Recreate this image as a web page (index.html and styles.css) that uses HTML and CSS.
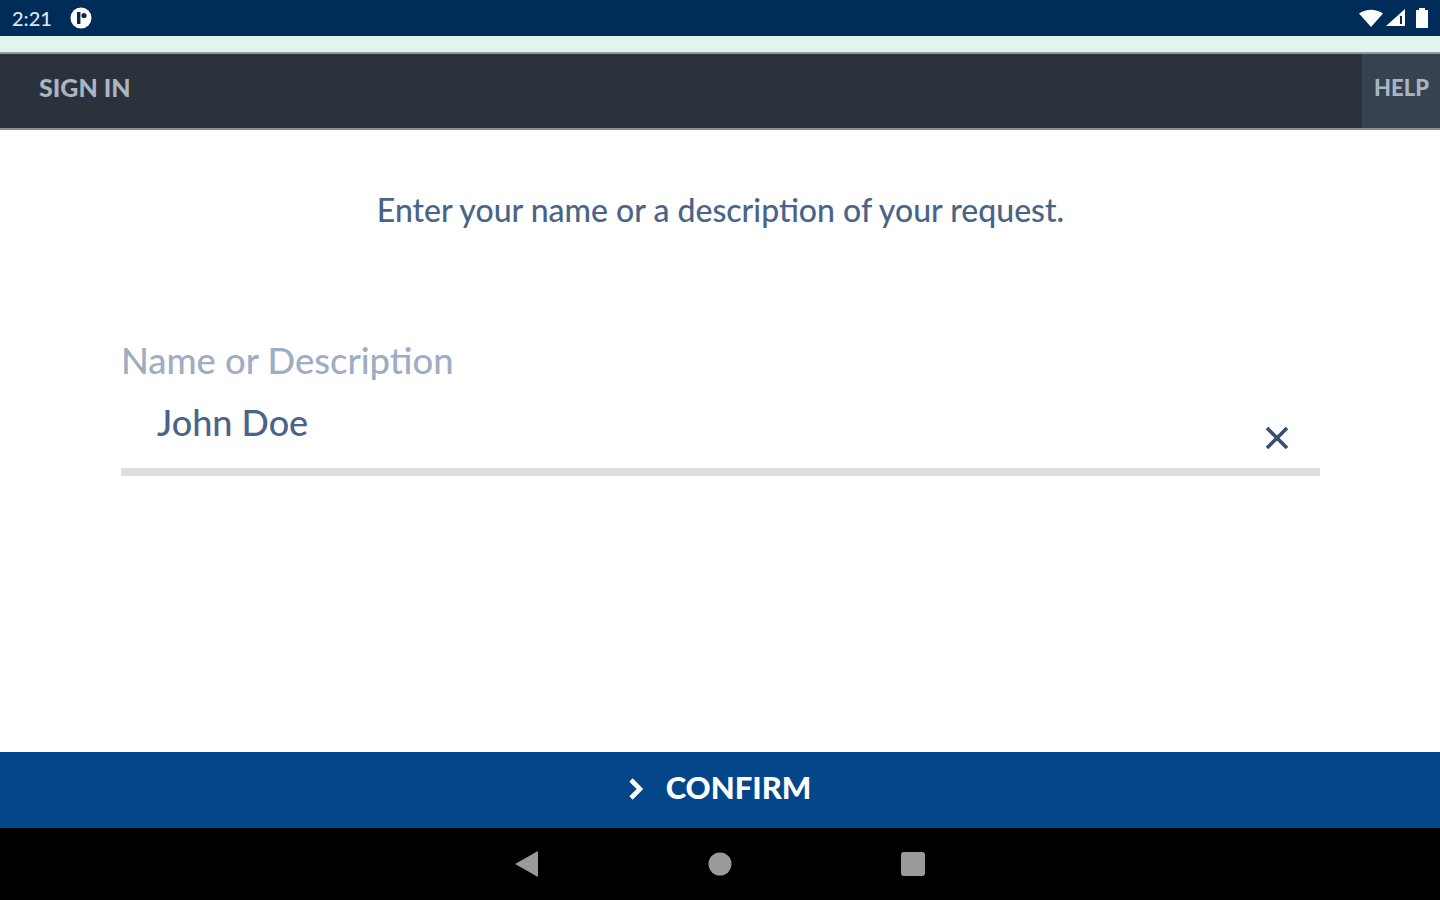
FILE: index.html
```html
<!DOCTYPE html>
<html lang="en">
<head>
  <meta charset="UTF-8">
  <meta name="viewport" content="width=device-width, initial-scale=1.0">
  <title>Sign In</title>
  <link rel="stylesheet" href="styles.css">
</head>
<body>
  <div class="status-bar">
    <div class="status-left">
      <span class="clock">2:21</span>
      <svg class="status-logo" width="22" height="22" viewBox="0 0 22 22">
        <circle cx="11" cy="11" r="10.5" fill="#fff"/>
        <rect x="7" y="5" width="3.4" height="12" fill="#0b2a4a"/>
        <circle cx="14" cy="8.5" r="2.6" fill="#0b2a4a"/>
      </svg>
    </div>
    <div class="status-right">
      <svg width="24" height="18" viewBox="0 0 24 18"><path d="M0 4.5 Q12 -3 24 4.5 L12 18Z" fill="#fff"/></svg>
      <svg width="20" height="18" viewBox="0 0 20 18"><path d="M0 17 L19 0 V17Z" fill="#fff"/><rect x="14" y="7" width="2" height="8" fill="#0b2a4a"/></svg>
      <svg class="battery" width="14" height="20" viewBox="0 0 14 20"><path d="M4 0 H10 V2 H13 V20 H1 V2 H4Z" fill="#fff"/></svg>
    </div>
  </div>
  <div class="strip"></div>

  <header class="top-bar">
    <h1>SIGN IN</h1>
    <a class="help" href="#">HELP</a>
  </header>

  <main class="content">
    <p class="intro">Enter your name or a description of your request.</p>
    <form class="field">
      <label for="name">Name or Description</label>
      <div class="input-row">
        <input id="name" type="text" value="John Doe">
        <svg class="clear" width="24" height="24" viewBox="0 0 24 24">
          <path d="M2 2 L22 22 M22 2 L2 22" stroke="#35506e" stroke-width="3.6" fill="none"/>
        </svg>
      </div>
    </form>
  </main>

  <button class="confirm">
    <svg class="chevron" width="16" height="24" viewBox="0 0 16 24"><path d="M3 3 L12 12 L3 21" stroke="#fff" stroke-width="4.6" fill="none"/></svg>
    <span>CONFIRM</span>
  </button>

  <nav class="nav-bar">
    <svg width="24" height="26" viewBox="0 0 24 26"><path d="M0 13 L23 0 V26Z" fill="#9a9a9a"/></svg>
    <svg width="24" height="24" viewBox="0 0 24 24"><circle cx="12" cy="12" r="11.5" fill="#9a9a9a"/></svg>
    <svg width="24" height="24" viewBox="0 0 24 24"><rect width="24" height="24" rx="3" fill="#9a9a9a"/></svg>
  </nav>
</body>
</html>
```

FILE: styles.css
```css
html, body {
  height: 100%;
}
body {
  margin: 0;
  height: 900px;
  overflow: hidden;
  display: flex;
  flex-direction: column;
  font-family: Lato, "Open Sans", Arial, sans-serif;
  background-color: #fff;
}
.status-bar {
  height: 36px;
  background-color: #002c5a;
  display: flex;
  justify-content: space-between;
  align-items: center;
  padding: 0 11px 0 12px;
  color: #fff;
}
.status-left {
  display: flex;
  align-items: center;
  gap: 18px;
}
.status-right {
  display: flex;
  align-items: center;
  gap: 3px;
}
.battery {
  margin-left: 6px;
}
.clock {
  font-size: 20px;
  font-weight: 500;
  color: #dfe5ec;
}
.status-logo {
  display: block;
}
.strip {
  height: 16px;
  background-color: #e3f4ee;
  border-bottom: 2px solid #8f9a9e;
}
.top-bar {
  height: 74px;
  background-color: #2b323c;
  border-bottom: 2px solid #8a9097;
  display: flex;
  justify-content: space-between;
  align-items: stretch;
}
.top-bar h1 {
  margin: 0;
  padding-left: 39px;
  font-size: 25px;
  font-weight: 900;
  line-height: 66px;
  color: #a9b5c1;
}
.help {
  width: 78px;
  background-color: #36424f;
  color: #a9b5c1;
  font-size: 22px;
  font-weight: 900;
  line-height: 68px;
  text-decoration: none;
  text-align: right;
  padding-right: 11px;
  box-sizing: border-box;
}
.content {
  flex: 1;
  padding: 0 120px 0 121px;
}
.intro {
  margin: 60px 0 0;
  text-align: center;
  font-size: 32px;
  font-weight: 500;
  line-height: 40px;
  color: #4a6488;
}
.field {
  margin-top: 108px;
}
.field label {
  display: block;
  font-size: 36.4px;
  font-weight: 500;
  line-height: 44px;
  color: #9fadc4;
}
.input-row {
  display: flex;
  align-items: flex-start;
  justify-content: space-between;
  height: 86px;
  padding-right: 31px;
  border-bottom: 8px solid #dcdee0;
}
.input-row input {
  flex: 1;
  border: none;
  outline: none;
  padding: 0 0 0 36px;
  margin-top: 18px;
  height: 44px;
  font-family: inherit;
  font-size: 36px;
  font-weight: 500;
  color: #4a6488;
  background: none;
}
.clear {
  margin-top: 44px;
}
.confirm {
  height: 76px;
  border: none;
  background-color: #03468a;
  color: #fff;
  display: flex;
  align-items: center;
  justify-content: center;
  gap: 22px;
  font-family: inherit;
  font-size: 31px;
  font-weight: 900;
  padding: 0 0 7px;
}
.chevron {
  margin: 4px 0 0 -1px;
}
.nav-bar {
  height: 72px;
  background-color: #000;
  display: flex;
  justify-content: center;
  align-items: center;
  gap: 169px;
}
```
